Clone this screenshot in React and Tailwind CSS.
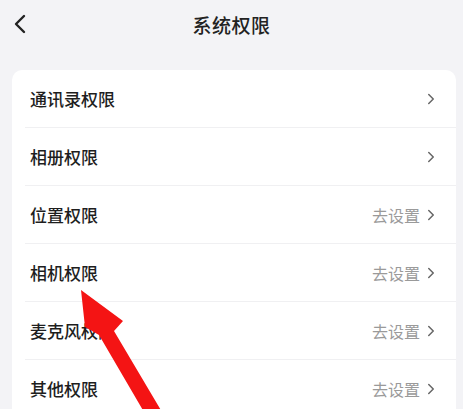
import { ChevronLeft, ChevronRight } from "lucide-react";

const ROWS = [
  { label: "通讯录权限", action: "" },
  { label: "相册权限", action: "" },
  { label: "位置权限", action: "去设置" },
  { label: "相机权限", action: "去设置" },
  { label: "麦克风权限", action: "去设置" },
  { label: "其他权限", action: "去设置" },
];

export default function App() {
  return (
    <div
      className="relative w-[463px] h-[409px] overflow-hidden bg-[#f3f3f6]"
      style={{ fontFamily: '"Noto Sans CJK SC", "Noto Sans", sans-serif' }}
    >
      {/* header */}
      <div className="relative flex items-center justify-center h-[50px]">
        <ChevronLeft className="absolute left-[4px] top-[8px] w-[32px] h-[32px] text-[#222]" strokeWidth={1.8} />
        <h1 className="text-[19px] text-[#222] font-medium tracking-[0.5px]">系统权限</h1>
      </div>

      {/* card */}
      <div className="mt-[20px] ml-[12px] w-[444px] bg-white rounded-[10px]">
        {ROWS.map((r, i) => (
          <div key={r.label} className="pl-[13px]">
            <div
              className={
                "flex items-center justify-between h-[58px] pl-[5px] pr-[16px] " +
                (i < ROWS.length - 1 ? "border-b border-[#f0f0f2]" : "")
              }
            >
              <span className="text-[17px] text-[#1e1e1e] font-medium">{r.label}</span>
              <span className="flex items-center gap-[2px] text-[16px] text-[#9a9a9a]">
                {r.action}
                <ChevronRight className="w-[18px] h-[18px] text-[#666]" strokeWidth={2} />
              </span>
            </div>
          </div>
        ))}
      </div>

      {/* red arrow annotation */}
      <svg className="absolute left-0 top-0 pointer-events-none" width="463" height="409" viewBox="0 0 463 409">
        <polygon
          points="81,290 123,321 114,331 162,412 144,412 99,335 85,327"
          fill="#f41414"
        />
      </svg>
    </div>
  );
}
